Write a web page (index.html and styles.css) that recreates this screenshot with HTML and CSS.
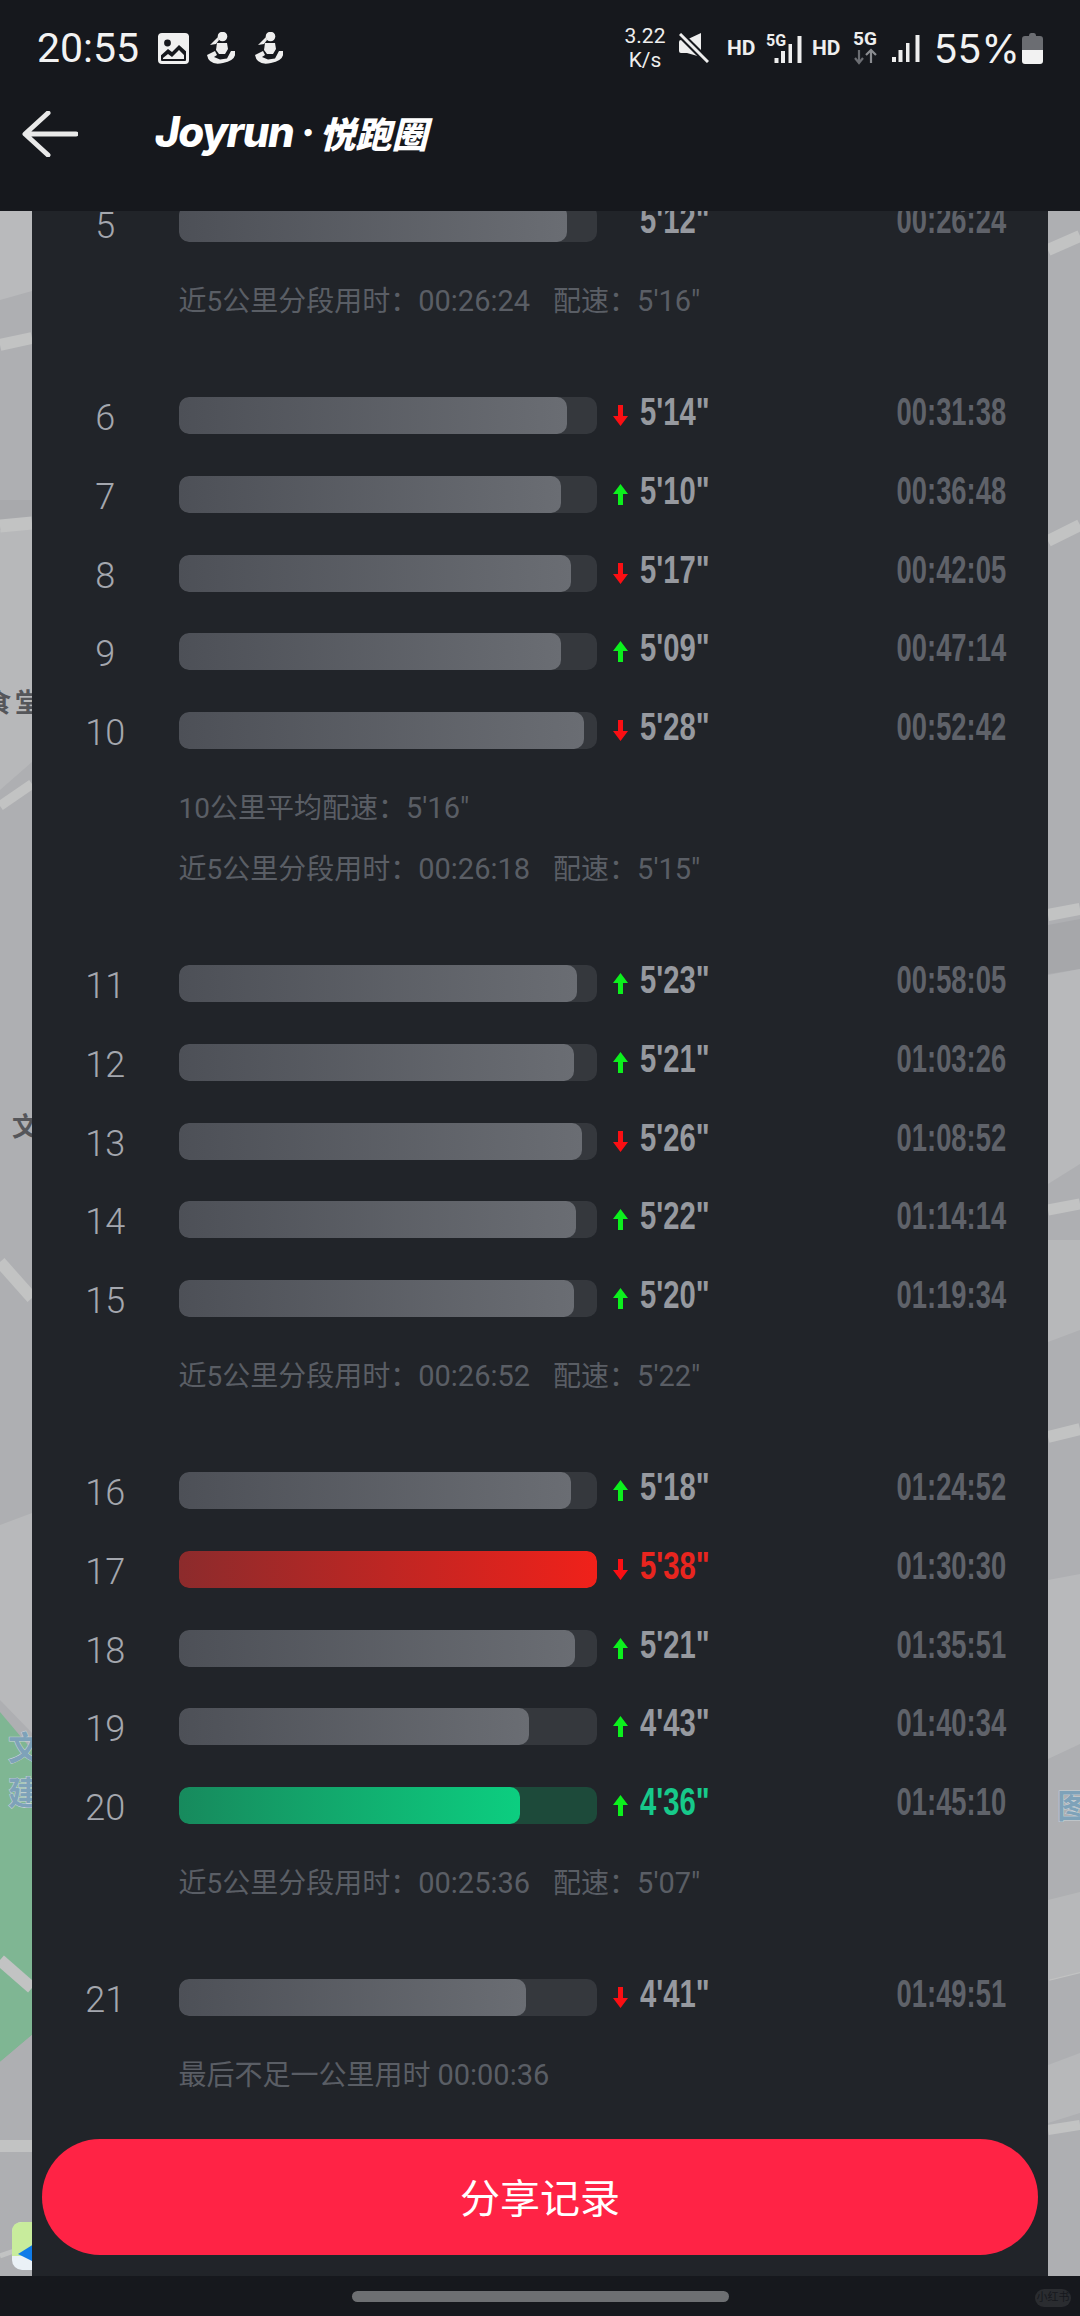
FILE: index.html
```html
<!DOCTYPE html>
<html lang="zh">
<head>
<meta charset="utf-8">
<title>Joyrun 悦跑圈</title>
<link rel="stylesheet" href="styles.css">
</head>
<body>
<header class="top">
  <div class="status">
    <div class="status-left">
      <span class="clock">20:55</span>
      <svg class="ic-image" viewBox="0 0 31 31"><rect width="31" height="31" rx="4" fill="#f0f0f0"/><rect x="3" y="3" width="25" height="25" rx="1" fill="#16181d"/><path d="M0 3h31v18l-10-9-7 7-4-3-10 9z" fill="#f0f0f0"/><circle cx="9.500" cy="10" r="3.400" fill="#16181d"/><path d="M5 26v-1l5-4 4 3 7-7 5 5v4z" fill="#f0f0f0"/></svg>
      <svg class="ic-runner" viewBox="0 0 28 32"><g fill="#eee"><circle cx="15.500" cy="4.500" r="4.800"/><path d="M11 5L3 13l6-1 3-4z"/><path d="M10 11h10l1 6-3 5h-6l-3-4z"/><path d="M0 23l8-4 2 4-3 2 6 2.500 7-1 4-7.500h4q2 9-12 12T0 23z"/></g></svg>
      <svg class="ic-runner second" viewBox="0 0 28 32"><g fill="#eee"><circle cx="15.500" cy="4.500" r="4.800"/><path d="M11 5L3 13l6-1 3-4z"/><path d="M10 11h10l1 6-3 5h-6l-3-4z"/><path d="M0 23l8-4 2 4-3 2 6 2.500 7-1 4-7.500h4q2 9-12 12T0 23z"/></g></svg>
    </div>
    <div class="status-right">
      <span class="speed">3.22<br>K/s</span>
      <svg class="ic-mute" viewBox="0 0 30 30"><path d="M0 9q0-2 2-2h5L22 0v24L8 20H2q-2 0-2-2z" fill="#eee"/><path d="M2 2l27 27" stroke="#16181d" stroke-width="7"/><path d="M1 1l28 28" stroke="#eee" stroke-width="3"/></svg>
      <span class="hd first">HD</span>
      <svg class="ic-signal-a" viewBox="0 0 36 30"><text x="0" y="13" class="svg-5g">5G</text><g fill="#eee"><rect x="8.500" y="25" width="4" height="5"/><rect x="15" y="18" width="4" height="12"/><rect x="22.500" y="11" width="3.500" height="19"/><rect x="31.500" y="3" width="4" height="27"/></g></svg>
      <span class="hd second">HD</span>
      <svg class="ic-5g" viewBox="0 0 24 32"><text x="0" y="13" class="svg-5g big">5G</text><path d="M6 18v13m-4-5l4 5 4-5" stroke="#6b6d72" stroke-width="2.200" fill="none"/><path d="M18 31V18m-5 5l5-5 5 5" stroke="#8a8c90" stroke-width="2.200" fill="none"/></svg>
      <svg class="ic-signal-b" viewBox="0 0 28 27"><g fill="#eee"><rect x="0" y="22" width="4" height="5"/><rect x="6.500" y="15" width="4" height="12"/><rect x="14" y="8" width="3.500" height="19"/><rect x="23.500" y="0" width="4" height="27"/></g></svg>
      <span class="percent">55%</span>
      <svg class="ic-battery" viewBox="0 0 21 31"><path d="M7 2.500Q7 0 9 0h3q2 0 2 2.500V3h4q3 0 3 3v11H0V6q0-3 3-3h4z" fill="#6b6d72"/><path d="M0 17h21v11q0 3-3 3H3q-3 0-3-3z" fill="#f2f2f2"/></svg>
    </div>
  </div>
  <nav class="nav">
    <svg class="ic-back" viewBox="0 0 56 46"><path d="M54 23H4M26 2L3 23l23 21" fill="none" stroke="#e9e9e9" stroke-width="5" stroke-linecap="round" stroke-linejoin="round"/></svg>
    <div class="logo"><span class="logo-en">Joyrun</span><span class="logo-dot">·</span><span class="logo-cn">悦跑圈</span></div>
  </nav>
</header>

<main class="stage">
  <svg class="map" viewBox="0 211 1080 2065" preserveAspectRatio="none">
    <rect x="0" y="211" width="1080" height="2065" fill="#aeafb2"/>
    <path d="M0 211h32v80L0 300z" fill="#b9babc"/>
    <path d="M0 530l32-8v240l-32 28z" fill="#b7b8ba"/>
    <path d="M0 500h32v25L0 530z" fill="#a8a9ac"/>
    <path d="M0 1525l32-12v220L0 1700z" fill="#b8b9bb"/>
    <path d="M0 1712l32 38v285L0 2062z" fill="#7fb693"/>
    <path d="M0 2062l32-27v241H0z" fill="#aeafb2"/>
    <g fill="none" stroke="#c2c3c3">
      <path d="M0 345l32-7" stroke-width="12"/>
      <path d="M0 526l32-3" stroke-width="13"/>
      <path d="M0 806l32-22" stroke-width="10"/>
      <path d="M0 1262l32 36" stroke-width="12"/>
      <path d="M0 1960l32 28" stroke-width="12"/>
      <path d="M0 2146h32" stroke-width="12"/>
      <path d="M0 2256l14-5" stroke-width="5"/>
      <path d="M1048 250l32-14" stroke-width="12"/>
      <path d="M1048 541l32-16" stroke-width="12"/>
      <path d="M1048 915l32-6" stroke-width="12"/>
      <path d="M1048 1210l32-6" stroke-width="11"/>
      <path d="M1048 1437l32-8" stroke-width="12"/>
      <path d="M1048 1975l32-8" stroke-width="12"/>
      <path d="M1048 2130l32-5" stroke-width="10"/>
    </g>
    <path d="M1048 925l32-6v50l-32 5z" fill="#a6a7aa"/>
    <path d="M1048 975l32-6v195l-32 20z" fill="#b8b9bb"/>
    <path d="M1048 1240h32v90l-32 12z" fill="#b7b8ba"/>
    <path d="M1048 1580l32-6v170l-32 15z" fill="#b8b9bb"/>
    <path d="M1048 1900l32-8v80l-32 8zM1048 2065l32-12v60l-32 10z" fill="#b7b8ba"/>
    <text x="-15" y="712" class="map-label">食</text>
    <text x="15" y="712" class="map-label">堂</text>
    <text x="12" y="1136" class="map-label">文</text>
    <text x="8" y="1760" class="map-label blue">文</text>
    <text x="8" y="1805" class="map-label blue">建</text>
    <text x="1057" y="1818" class="map-label blue">图</text>
    <rect x="12" y="2222" width="30" height="48" rx="10" fill="#eaf1f6"/>
    <path d="M12 2232q0-10 10-10h12v34H12z" fill="#c8ec9c"/>
    <path d="M18 2254l16-10v18z" fill="#0f7be8"/>
  </svg>
  <section class="panel">
    <div class="group first">
      <div class="row"><span class="num">5</span><div class="track"><div class="fill" style="width:92.800%"></div></div><span class="trend"></span><span class="pace"><b>5'12"</b></span><span class="total"><b>00:26:24</b></span></div>
      <div class="notes"><p>近5公里分段用时：<span class="val">00:26:24</span><span class="sep">配速：<span class="val">5'16"</span></span></p></div>
    </div>
    <div class="group">
      <div class="row"><span class="num">6</span><div class="track"><div class="fill" style="width:92.800%"></div></div><svg class="trend down" viewBox="0 0 15 21"><path d="M5 0h5v11h5l-7.500 10L0 11h5z"/></svg><span class="pace"><b>5'14"</b></span><span class="total"><b>00:31:38</b></span></div>
      <div class="row"><span class="num">7</span><div class="track"><div class="fill" style="width:91.400%"></div></div><svg class="trend up" viewBox="0 0 15 21"><path d="M5 21h5V10h5L7.500 0 0 10h5z"/></svg><span class="pace"><b>5'10"</b></span><span class="total"><b>00:36:48</b></span></div>
      <div class="row"><span class="num">8</span><div class="track"><div class="fill" style="width:93.800%"></div></div><svg class="trend down" viewBox="0 0 15 21"><path d="M5 0h5v11h5l-7.500 10L0 11h5z"/></svg><span class="pace"><b>5'17"</b></span><span class="total"><b>00:42:05</b></span></div>
      <div class="row"><span class="num">9</span><div class="track"><div class="fill" style="width:91.400%"></div></div><svg class="trend up" viewBox="0 0 15 21"><path d="M5 21h5V10h5L7.500 0 0 10h5z"/></svg><span class="pace"><b>5'09"</b></span><span class="total"><b>00:47:14</b></span></div>
      <div class="row"><span class="num">10</span><div class="track"><div class="fill" style="width:96.900%"></div></div><svg class="trend down" viewBox="0 0 15 21"><path d="M5 0h5v11h5l-7.500 10L0 11h5z"/></svg><span class="pace"><b>5'28"</b></span><span class="total"><b>00:52:42</b></span></div>
      <div class="notes double"><p>10公里平均配速：<span class="val">5'16"</span></p><p>近5公里分段用时：<span class="val">00:26:18</span><span class="sep">配速：<span class="val">5'15"</span></span></p></div>
    </div>
    <div class="group">
      <div class="row"><span class="num">11</span><div class="track"><div class="fill" style="width:95.300%"></div></div><svg class="trend up" viewBox="0 0 15 21"><path d="M5 21h5V10h5L7.500 0 0 10h5z"/></svg><span class="pace"><b>5'23"</b></span><span class="total"><b>00:58:05</b></span></div>
      <div class="row"><span class="num">12</span><div class="track"><div class="fill" style="width:94.600%"></div></div><svg class="trend up" viewBox="0 0 15 21"><path d="M5 21h5V10h5L7.500 0 0 10h5z"/></svg><span class="pace"><b>5'21"</b></span><span class="total"><b>01:03:26</b></span></div>
      <div class="row"><span class="num">13</span><div class="track"><div class="fill" style="width:96.300%"></div></div><svg class="trend down" viewBox="0 0 15 21"><path d="M5 0h5v11h5l-7.500 10L0 11h5z"/></svg><span class="pace"><b>5'26"</b></span><span class="total"><b>01:08:52</b></span></div>
      <div class="row"><span class="num">14</span><div class="track"><div class="fill" style="width:95.100%"></div></div><svg class="trend up" viewBox="0 0 15 21"><path d="M5 21h5V10h5L7.500 0 0 10h5z"/></svg><span class="pace"><b>5'22"</b></span><span class="total"><b>01:14:14</b></span></div>
      <div class="row"><span class="num">15</span><div class="track"><div class="fill" style="width:94.500%"></div></div><svg class="trend up" viewBox="0 0 15 21"><path d="M5 21h5V10h5L7.500 0 0 10h5z"/></svg><span class="pace"><b>5'20"</b></span><span class="total"><b>01:19:34</b></span></div>
      <div class="notes"><p>近5公里分段用时：<span class="val">00:26:52</span><span class="sep">配速：<span class="val">5'22"</span></span></p></div>
    </div>
    <div class="group">
      <div class="row"><span class="num">16</span><div class="track"><div class="fill" style="width:93.900%"></div></div><svg class="trend up" viewBox="0 0 15 21"><path d="M5 21h5V10h5L7.500 0 0 10h5z"/></svg><span class="pace"><b>5'18"</b></span><span class="total"><b>01:24:52</b></span></div>
      <div class="row slow"><span class="num">17</span><div class="track"><div class="fill" style="width:100%"></div></div><svg class="trend down" viewBox="0 0 15 21"><path d="M5 0h5v11h5l-7.500 10L0 11h5z"/></svg><span class="pace"><b>5'38"</b></span><span class="total"><b>01:30:30</b></span></div>
      <div class="row"><span class="num">18</span><div class="track"><div class="fill" style="width:94.800%"></div></div><svg class="trend up" viewBox="0 0 15 21"><path d="M5 21h5V10h5L7.500 0 0 10h5z"/></svg><span class="pace"><b>5'21"</b></span><span class="total"><b>01:35:51</b></span></div>
      <div class="row"><span class="num">19</span><div class="track"><div class="fill" style="width:83.700%"></div></div><svg class="trend up" viewBox="0 0 15 21"><path d="M5 21h5V10h5L7.500 0 0 10h5z"/></svg><span class="pace"><b>4'43"</b></span><span class="total"><b>01:40:34</b></span></div>
      <div class="row fast"><span class="num">20</span><div class="track"><div class="fill" style="width:81.600%"></div></div><svg class="trend up" viewBox="0 0 15 21"><path d="M5 21h5V10h5L7.500 0 0 10h5z"/></svg><span class="pace"><b>4'36"</b></span><span class="total"><b>01:45:10</b></span></div>
      <div class="notes"><p>近5公里分段用时：<span class="val">00:25:36</span><span class="sep">配速：<span class="val">5'07"</span></span></p></div>
    </div>
    <div class="group">
      <div class="row"><span class="num">21</span><div class="track"><div class="fill" style="width:83%"></div></div><svg class="trend down" viewBox="0 0 15 21"><path d="M5 0h5v11h5l-7.500 10L0 11h5z"/></svg><span class="pace"><b>4'41"</b></span><span class="total"><b>01:49:51</b></span></div>
      <div class="notes"><p>最后不足一公里用时 <span class="val">00:00:36</span></p></div>
    </div>
  </section>
  <button class="share">分享记录</button>
</main>

<footer class="gesture">
  <span class="home-bar"></span>
  <span class="mark">小红书</span>
</footer>
</body>
</html>
```

FILE: styles.css
```css
* { box-sizing: border-box; }
html, body { margin: 0; padding: 0; }
body {
  width: 1080px;
  height: 2316px;
  overflow: hidden;
  background: #16181d;
  display: flex;
  flex-direction: column;
  font-family: Roboto, "Noto Sans CJK SC", sans-serif;
}
.top { height: 211px; flex: none; background: #16181d; color: #f0f0f0; }
.status { height: 96px; display: flex; justify-content: space-between; align-items: center; padding: 0 37px 0 37px; }
.status-left, .status-right { display: flex; align-items: center; }
.clock { font-size: 41px; font-weight: 400; width: 103px; color: #f2f2f2; }
.ic-image { width: 31px; height: 31px; margin-left: 18px; }
.ic-runner { width: 28px; height: 32px; margin-left: 18px; }
.ic-runner.second { margin-left: 20px; }
.speed { width: 44px; font-size: 21px; line-height: 24px; text-align: center; color: #eee; }
.ic-mute { width: 30px; height: 30px; margin-left: 12px; }
.hd { font-size: 21px; font-weight: 700; color: #eee; width: 27px; line-height: 24px; }
.hd.first { margin-left: 18px; }
.hd.second { margin-left: 10px; }
.ic-signal-a { width: 36px; height: 30px; margin-left: 12px; overflow: visible; }
.svg-5g { font: 700 16px Roboto, sans-serif; fill: #eee; }
.svg-5g.big { font-size: 19px; }
.ic-5g { width: 24px; height: 32px; margin-left: 14px; overflow: visible; }
.ic-signal-b { width: 28px; height: 27px; margin-left: 15px; }
.percent { font-family: Inter, Roboto, sans-serif; font-size: 39px; width: 83px; margin-left: 14px; color: #f2f2f2; white-space: nowrap; }
.ic-battery { width: 21px; height: 31px; margin-left: 5px; }

.nav { height: 76px; display: flex; align-items: center; padding-left: 22px; }
.ic-back { width: 56px; height: 46px; }
.logo { margin: 0 0 5px 77px; display: flex; align-items: center; font-style: italic; font-weight: 900; color: #fff; }
.logo-en { font-family: Inter, sans-serif; font-size: 42px; letter-spacing: -1.500px; font-weight: 800; }
.logo-dot { font-family: Inter, sans-serif; font-size: 36px; margin: 0 5px 0 8px; }
.logo-cn { font-family: "Noto Sans CJK SC", sans-serif; font-size: 36px; font-weight: 900; }

.stage { position: relative; height: 2065px; flex: none; overflow: hidden; }
.map { position: absolute; inset: 0; width: 100%; height: 100%; }
.map-label { font: 700 26px "Noto Sans CJK SC", sans-serif; fill: #55565a; }
.map-label.blue { fill: #7ea2b9; font-size: 33px; stroke: #c9d3d8; stroke-width: 1px; paint-order: stroke; }
.panel {
  position: relative;
  margin: 0 32px;
  height: 100%;
  background: #212429;
  overflow: hidden;
}
.group { display: flex; flex-direction: column; gap: 41.75px; padding-bottom: 75px; }
.group.first { margin-top: -6px; }
.row { display: flex; align-items: center; height: 37px; }
.num {
  width: 146.500px;
  flex: none;
  text-align: center;
  font-size: 36px;
  font-weight: 300;
  color: #a4a7ae;
  padding-top: 5px;
}
.track {
  width: 418.500px;
  height: 37px;
  flex: none;
  background: #35383d;
  border-radius: 10px;
  overflow: hidden;
}
.fill {
  height: 100%;
  border-radius: 10px;
  background: linear-gradient(90deg, #4d5057, #6a6d73);
}
.trend { width: 15px; height: 21px; flex: none; margin-left: 16px; padding: 0; }
.trend.up { fill: #0cf01d; }
.trend.down { fill: #fb0f13; }
.pace, .total {
  font-family: "Liberation Sans", sans-serif;
  font-weight: 700;
  font-size: 38px;
  line-height: 37px;
  padding-bottom: 6px;
  white-space: nowrap;
}
.pace b, .total b { display: inline-block; font-weight: 700; }
.pace b { transform: scaleX(.77); transform-origin: left center; }
.total b { transform: scaleX(.72); transform-origin: right center; }
.pace { width: 120px; margin-left: 12px; color: #96999f; }
.total { flex: 1; text-align: right; padding-right: 42px; color: #5f6269; }
.row.slow .track { background: #5a2020; }
.row.slow .fill { background: linear-gradient(90deg, #8c2b2c, #f0211a); }
.row.slow .pace { color: #e8251f; }
.row.fast .track { background: #1d4a3a; }
.row.fast .fill { background: linear-gradient(90deg, #178a5d, #0cce80); }
.row.fast .pace { color: #17c98a; }
.notes { margin-top: -1.750px; padding-left: 146.500px; color: #5a5e65; font-size: 28px; line-height: 40px; display: flex; flex-direction: column; }
.notes.double { gap: 21px; }
.notes p { margin: 0; height: 40px; white-space: nowrap; }
.val { font-size: 29px; line-height: 1; }
.sep { margin-left: 23px; }
.share {
  position: absolute;
  left: 42px;
  right: 42px;
  bottom: 21px;
  height: 116px;
  border: 0;
  border-radius: 58px;
  background: #ff2345;
  color: #fff;
  font-family: "Noto Sans CJK SC", sans-serif;
  font-size: 40px;
  line-height: 1;
  padding: 0 0 2px;
}
.gesture { position: relative; height: 40px; flex: none; background: #16181d; display: flex; justify-content: center; padding-top: 15px; }
.home-bar { width: 377px; height: 11px; background: #6d6f72; border-radius: 6px; }
.mark {
  position: absolute;
  left: 1035px;
  top: 13px;
  width: 36px;
  height: 18px;
  border-radius: 9px;
  background: #2a2c30;
  color: #16181d;
  font-size: 11px;
  line-height: 18px;
  text-align: center;
  white-space: nowrap;
}
```
